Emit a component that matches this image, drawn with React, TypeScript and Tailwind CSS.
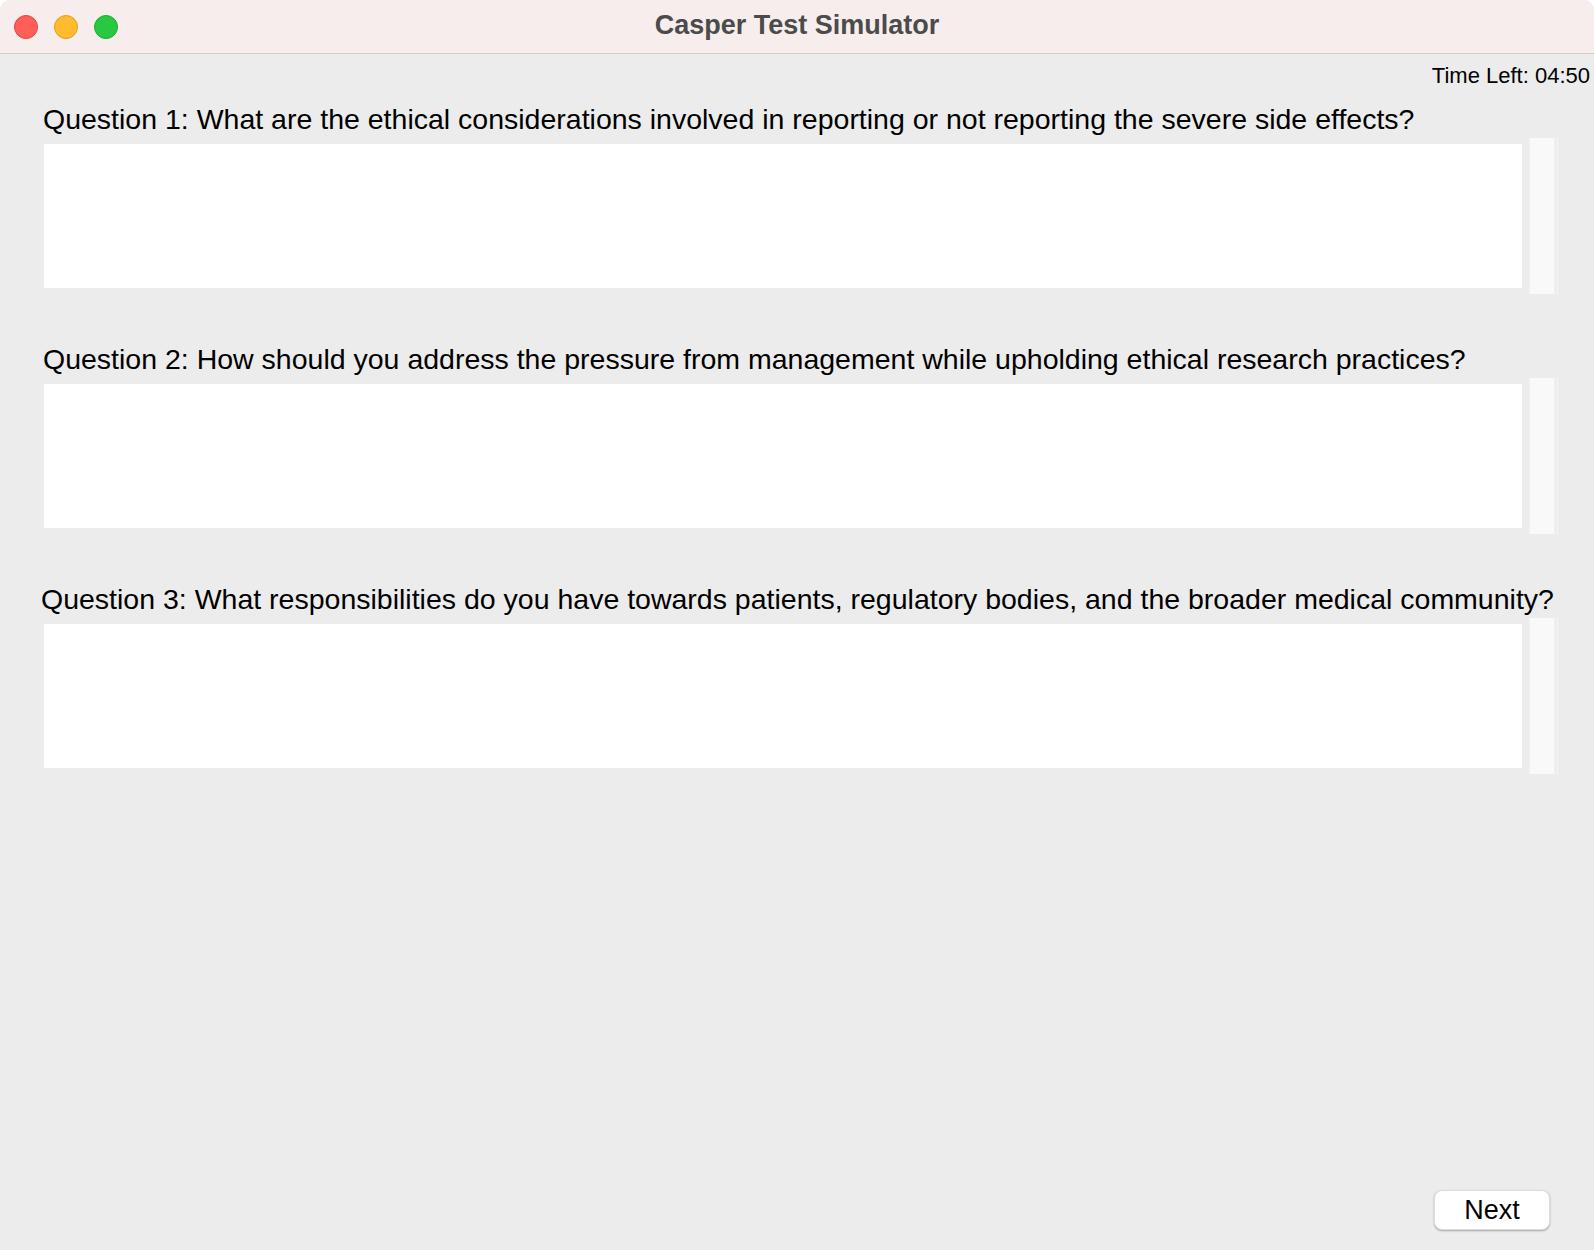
import React from "react";

const questions = [
  "Question 1: What are the ethical considerations involved in reporting or not reporting the severe side effects?",
  "Question 2: How should you address the pressure from management while upholding ethical research practices?",
  "Question 3: What responsibilities do you have towards patients, regulatory bodies, and the broader medical community?",
];

function TrafficLights() {
  return (
    <div className="flex items-center gap-4 pl-[14px]">
      <span className="h-6 w-6 rounded-full bg-[#ff5f57] border border-[#e2463f]"></span>
      <span className="h-6 w-6 rounded-full bg-[#febc2e] border border-[#e1a116]"></span>
      <span className="h-6 w-6 rounded-full bg-[#28c840] border border-[#1dad2b]"></span>
    </div>
  );
}

function AnswerBox({ label, index }: { label: string; index: number }) {
  return (
    <div className="flex flex-col">
      <div
        className={`text-[28.5px] leading-none text-black whitespace-nowrap ${
          index === 2 ? "pl-[41px]" : "pl-[43px]"
        }`}
      >
        {label}
      </div>
      <div className="mt-[4px] flex h-[156px] items-center pl-[44px]">
        <textarea className="h-[144px] w-[1478px] resize-none bg-white outline-none" />
        <div className="ml-[7px] flex h-[156px] items-stretch">
          <div className="w-[26px] bg-[#f9f9f9] border-x border-[#f1f1f1]"></div>
          <div className="ml-[2px] w-px bg-[#f6f6f6]"></div>
        </div>
      </div>
    </div>
  );
}

export default function App() {
  return (
    <div
      className="flex h-[1250px] w-[1594px] flex-col overflow-hidden rounded-t-[10px] bg-[#ececec]"
      style={{ fontFamily: '"Liberation Sans", Arial, Helvetica, sans-serif' }}
    >
      {/* title bar */}
      <div className="relative flex h-[54px] items-center border-b border-[#d4cfcf] bg-[#f7eded]">
        <TrafficLights />
        <div className="absolute inset-0 flex items-center justify-center pb-[2px] text-[27px] font-bold text-[#4b4b4b]">
          Casper Test Simulator
        </div>
      </div>

      {/* body */}
      <div className="flex flex-1 flex-col">
        <div className="flex justify-end pt-[11px] pr-[4px] text-[22px] leading-none text-black">
          Time Left: 04:50
        </div>

        <div className="mt-[18px] flex flex-col gap-[51.5px]">
          {questions.map((q, i) => (
            <AnswerBox key={i} label={q} index={i} />
          ))}
        </div>

        <div className="mt-auto flex justify-end pr-[44px] pb-[20px]">
          <button className="h-[40px] w-[116px] rounded-[8px] bg-white text-[27px] leading-none text-black shadow-[0_1px_2px_rgba(0,0,0,0.3)] border border-[#dcdcdc]">
            Next
          </button>
        </div>
      </div>
    </div>
  );
}
